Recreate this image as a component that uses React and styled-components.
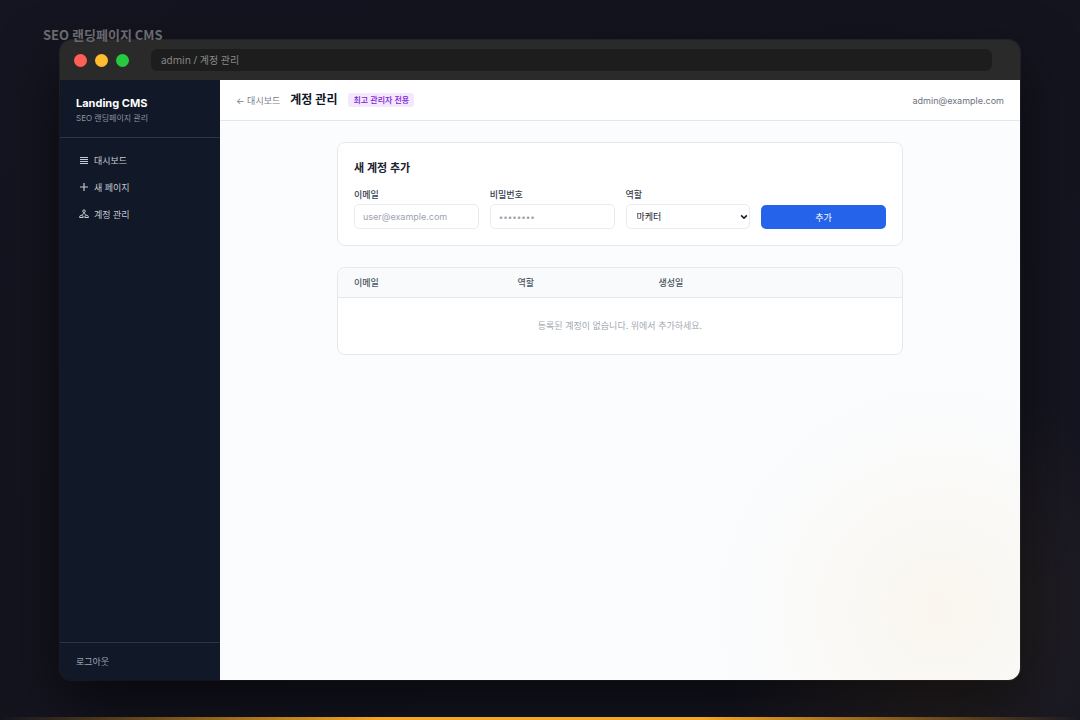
import React from 'react'
import styled, { createGlobalStyle } from 'styled-components'

const GlobalStyle = createGlobalStyle`
*, *::before, *::after {
    box-sizing: border-box;
}
body {
    margin: 0;
    background: #14141f;
    font-family: Inter, "Noto Sans CJK KR", sans-serif;
}
h1, h2, p {
    margin: 0;
}
button, input, select {
    font-family: inherit;
}
`

const navItems = [
    { label: '대시보드', icon: 'list' },
    { label: '새 페이지', icon: 'plus' },
    { label: '계정 관리', icon: 'people' },
]

const columns = ['이메일', '역할', '생성일', '']

const NavIcon = ({ name }) => (
    <svg width="10" height="10" viewBox="0 0 10 10" fill="none" stroke="currentColor" aria-hidden="true">
        {name === 'list' && <path d="M1 2.5h8M1 4.5h8M1 6.5h8M1 8.5h8" strokeWidth="1.2" />}
        {name === 'plus' && <path d="M5 1v8M1 5h8" strokeWidth="1.2" />}
        {name === 'people' && (
            <>
                <circle cx="5" cy="2.2" r="1.3" />
                <path d="M5 3.5v1.4M2.6 5.8L5 4.6l2.4 1.2" strokeWidth=".8" />
                <path d="M.6 8.5V7.9Q.6 6.4 2.4 6.4T4.2 7.9v.6zM5.8 8.5V7.9q0-1.5 1.8-1.5t1.8 1.5v.6z" />
            </>
        )}
    </svg>
)

const App = () => {
    return (
        <Stage>
            <GlobalStyle />
            <StageTitle>SEO 랜딩페이지 CMS</StageTitle>
            <Browser>
                <TitleBar>
                    <Dot $color="#ff5f57" />
                    <Dot $color="#febc2e" />
                    <Dot $color="#28c840" />
                    <Address>admin / 계정 관리</Address>
                </TitleBar>
                <Screen>
                    <Sidebar>
                        <Brand>
                            <BrandName>Landing CMS</BrandName>
                            <BrandNote>SEO 랜딩페이지 관리</BrandNote>
                        </Brand>
                        <Nav>
                            {navItems.map((item) => (
                                <NavLink href="#" key={item.label}>
                                    <NavIcon name={item.icon} />
                                    {item.label}
                                </NavLink>
                            ))}
                        </Nav>
                        <SidebarFooter>
                            <Logout type="button">로그아웃</Logout>
                        </SidebarFooter>
                    </Sidebar>
                    <Main>
                        <Header>
                            <BackLink href="#">← 대시보드</BackLink>
                            <PageTitle>계정 관리</PageTitle>
                            <Badge>최고 관리자 전용</Badge>
                            <UserEmail>admin@example.com</UserEmail>
                        </Header>
                        <Content>
                            <FormCard>
                                <CardTitle>새 계정 추가</CardTitle>
                                <Form>
                                    <Field>
                                        <Label htmlFor="email">이메일</Label>
                                        <Input id="email" type="email" placeholder="user@example.com" />
                                    </Field>
                                    <Field>
                                        <Label htmlFor="password">비밀번호</Label>
                                        <PasswordInput id="password" type="password" placeholder="••••••••" />
                                    </Field>
                                    <Field>
                                        <Label htmlFor="role">역할</Label>
                                        <SelectWrap>
                                            <Select id="role">
                                                <option>마케터</option>
                                            </Select>
                                            <Chevron viewBox="0 0 8 6" aria-hidden="true">
                                                <path d="M1.2 1.4L4 4.2l2.8-2.8" fill="none" stroke="currentColor" strokeWidth="1.6" />
                                            </Chevron>
                                        </SelectWrap>
                                    </Field>
                                    <Submit type="button">추가</Submit>
                                </Form>
                            </FormCard>
                            <TableCard>
                                <Table>
                                    <thead>
                                        <tr>
                                            {columns.map((name, i) => (
                                                <Th key={i}>{name}</Th>
                                            ))}
                                        </tr>
                                    </thead>
                                    <tbody>
                                        <tr>
                                            <Empty colSpan={4}>등록된 계정이 없습니다. 위에서 추가하세요.</Empty>
                                        </tr>
                                    </tbody>
                                </Table>
                            </TableCard>
                        </Content>
                    </Main>
                </Screen>
            </Browser>
            <Glow />
            <BottomLine />
        </Stage>
    )
}

export default App

const Stage = styled.div`
    position: relative;
    display: flex;
    min-height: 100vh;
    padding: 40px 60px;
    overflow: hidden;
    background: linear-gradient(135deg, #151521 0%, #14141f 50%, #161622 100%);
`

const StageTitle = styled.p`
    position: absolute;
    z-index: 1;
    top: 26px;
    left: 43px;
    font-family: "Noto Sans CJK KR", sans-serif;
    font-size: 13px;
    font-weight: 700;
    line-height: 18px;
    color: #6a6a6e;
`

const Browser = styled.div`
    flex: 1;
    display: flex;
    flex-direction: column;
    border-radius: 12px;
    overflow: hidden;
    box-shadow: 0 24px 60px rgba(0, 0, 0, 0.6), 0 0 0 1px rgba(255, 255, 255, 0.08);
`

const TitleBar = styled.div`
    display: flex;
    align-items: center;
    gap: 8px;
    height: 40px;
    padding: 0 28px 0 14px;
    background: #2a2a2a;
`

const Dot = styled.span`
    width: 13px;
    height: 13px;
    border-radius: 50%;
    background: ${(props) => props.$color};
`

const Address = styled.div`
    flex: 1;
    height: 22px;
    margin-left: 14px;
    padding: 0 10px;
    border-radius: 6px;
    background: #1d1d1d;
    font-family: "Noto Sans", "Noto Sans CJK KR", sans-serif;
    font-size: 10px;
    line-height: 22px;
    color: #888;
`

const Screen = styled.div`
    flex: 1;
    display: flex;
`

const Sidebar = styled.aside`
    display: flex;
    flex-direction: column;
    width: 160px;
    background: #111827;
`

const Brand = styled.div`
    height: 58px;
    padding: 14px 16px;
    border-bottom: 1px solid #2b3543;
`

const BrandName = styled.p`
    font-size: 11px;
    font-weight: 700;
    line-height: 18px;
    color: #fff;
`

const BrandNote = styled.p`
    font-size: 8px;
    line-height: 12px;
    color: #8b93a0;
`

const Nav = styled.nav`
    flex: 1;
    display: flex;
    flex-direction: column;
    gap: 3px;
    padding: 10px 8px;
`

const NavLink = styled.a`
    display: flex;
    align-items: center;
    gap: 5px;
    height: 24px;
    padding: 0 11px;
    font-size: 9px;
    color: #c5cad2;
    text-decoration: none;
`

const SidebarFooter = styled.div`
    height: 38px;
    padding: 11px 16px;
    border-top: 1px solid #2b3543;
`

const Logout = styled.button`
    display: block;
    padding: 0;
    border: 0;
    background: none;
    font-size: 9px;
    line-height: 16px;
    color: #9ca3af;
`

const Main = styled.main`
    flex: 1;
    background: #fafcfe;
`

const Header = styled.header`
    display: flex;
    align-items: center;
    height: 41px;
    padding: 0 16px;
    border-bottom: 1px solid #e5e7eb;
    background: #fff;
`

const BackLink = styled.a`
    font-size: 9px;
    color: #7a808c;
    text-decoration: none;
`

const PageTitle = styled.h1`
    margin-left: 10px;
    font-size: 12px;
    font-weight: 600;
    line-height: 20px;
    color: #111827;
`

const Badge = styled.span`
    margin-left: 11px;
    padding: 0 5px;
    border-radius: 3px;
    background: #f3e8ff;
    font-size: 8px;
    font-weight: 500;
    line-height: 14px;
    color: #7e22ce;
`

const UserEmail = styled.span`
    margin-left: auto;
    font-size: 9px;
    color: #6b7280;
`

const Content = styled.div`
    display: flex;
    flex-direction: column;
    gap: 21px;
    max-width: 598px;
    margin: 0 auto;
    padding: 21px 16px;
`

const Card = styled.section`
    border: 1px solid #e5e9ee;
    border-radius: 8px;
    background: #fff;
`

const FormCard = styled(Card)`
    padding: 16px;
`

const TableCard = styled(Card)`
    overflow: hidden;
`

const CardTitle = styled.h2`
    margin-bottom: 10px;
    font-size: 11px;
    font-weight: 600;
    line-height: 18px;
    color: #1c222e;
`

const Form = styled.form`
    display: grid;
    grid-template-columns: repeat(4, 1fr);
    align-items: end;
    gap: 11px;
`

const Field = styled.div`
    display: flex;
    flex-direction: column;
    gap: 1px;
    min-width: 0;
`

const Label = styled.label`
    font-size: 9px;
    font-weight: 500;
    line-height: 16px;
    color: #374151;
`

const Input = styled.input`
    width: 100%;
    height: 25px;
    padding: 0 8px;
    border: 1px solid #e9ebef;
    border-radius: 5px;
    background: #fff;
    font-size: 9px;
    color: #111827;
    &::placeholder {
        color: #9ca3af;
    }
`

const PasswordInput = styled(Input)`
    font-size: 8px;
`

const SelectWrap = styled.div`
    position: relative;
`

const Select = styled.select`
    display: block;
    width: 100%;
    height: 25px;
    padding: 0 16px 0 10px;
    border: 1px solid #e9ebef;
    border-radius: 5px;
    background: #fff;
    font-size: 9px;
    color: #111827;
    appearance: none;
`

const Chevron = styled.svg`
    position: absolute;
    top: 10px;
    right: 2px;
    width: 8px;
    height: 6px;
    color: #111827;
    pointer-events: none;
`

const Submit = styled.button`
    height: 24px;
    border: 0;
    border-radius: 5px;
    background: #2563eb;
    font-size: 9px;
    font-weight: 400;
    color: #fff;
`

const Table = styled.table`
    width: 100%;
    border-collapse: collapse;
`

const Th = styled.th`
    height: 29px;
    padding: 0 16px;
    border-bottom: 1px solid #e5e7eb;
    background: #f9fafb;
    font-size: 9px;
    font-weight: 500;
    text-align: left;
    color: #4b5563;
    &:nth-child(1) {
        width: 29%;
    }
    &:nth-child(2) {
        width: 25%;
    }
    &:nth-child(3) {
        width: 26%;
    }
`

const Empty = styled.td`
    height: 57px;
    padding: 0 16px;
    font-size: 9px;
    text-align: center;
    color: #a3a9b4;
`

const Glow = styled.div`
    position: absolute;
    right: -90px;
    bottom: -120px;
    width: 460px;
    height: 460px;
    border-radius: 50%;
    background: radial-gradient(circle, rgba(245, 166, 35, 0.07) 0%, transparent 70%);
    pointer-events: none;
`

const BottomLine = styled.div`
    position: absolute;
    right: 0;
    bottom: 0;
    left: 0;
    height: 3px;
    background: linear-gradient(90deg, transparent, #f5a623 35%, #f5a623 65%, transparent);
`
